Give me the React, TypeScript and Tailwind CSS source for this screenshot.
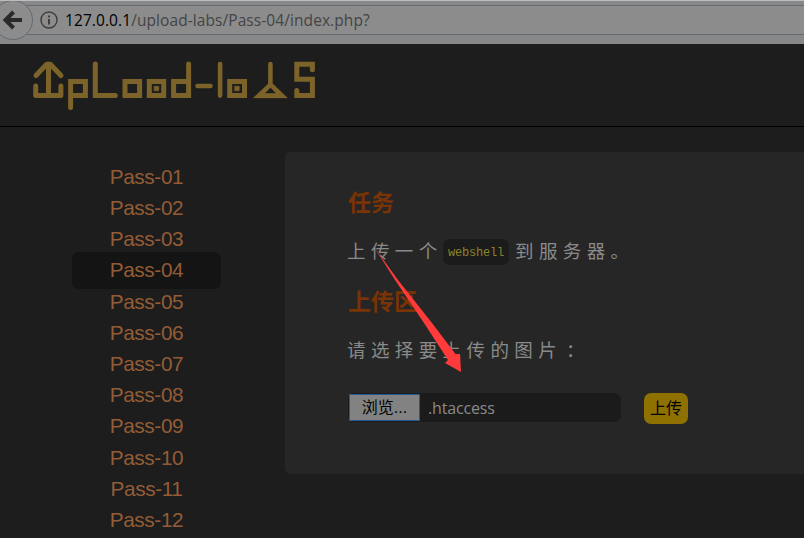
import React from "react";

const passes = ["01", "02", "03", "04", "05", "06", "07", "08", "09", "10", "11", "12"];
const cjk = "font-['Liberation_Sans','Noto_Sans_CJK_SC',sans-serif]";

function AddressBar() {
  return (
    <div className="relative h-[44px] border-t border-[#bdbdbd] bg-[#888888] overflow-hidden">
      <div className="mt-[4px] flex h-[30px] items-center border-y border-[#636b73] bg-[#8c8c8c] pl-[40px]">
        <svg width="18" height="18" viewBox="0 0 18 18" fill="none" stroke="#3e3e3e" strokeWidth="1.4">
          <circle cx="9" cy="9" r="8" />
          <path d="M9 8v5.4M9 4.6v2" strokeWidth="2" />
        </svg>
        <span className="ml-[7px] whitespace-pre font-['Open_Sans',sans-serif] text-[15.5px] leading-[28px] tracking-[0.08px] text-[#444]">
          <span className="text-black">127.0.0.1</span>/upload-labs/Pass-04/index.php?
        </span>
      </div>
      <svg className="absolute left-0 top-[-1px]" width="36" height="44" viewBox="0 0 36 44" fill="none">
        <circle cx="13" cy="20" r="19.5" fill="#8c8c8c" stroke="#636b73" />
        <path d="M22 20H6M13.5 12L5.5 20l8 8" stroke="#2a2a2a" strokeWidth="4" />
      </svg>
    </div>
  );
}

function Logo() {
  return (
    <svg width="300" height="60" viewBox="25 55 300 60" fill="none" stroke="#7c6329" strokeWidth="5" strokeLinecap="round" strokeLinejoin="round" className="block">
      <path d="M36 75.5L46.7 64.2h3.6L61 75.5M48.5 65v30M35.7 86v9.6h25.2V86" />
      <path d="M70.6 107.5V81.4h14.8v14.2H70.6" strokeLinejoin="miter" />
      <path d="M95.3 64v31.6h20" strokeLinejoin="miter" />
      <path d="M125 81.4h14.6v14.2H125zM149.3 81.4h14.4v14.2h-14.4zM188.6 64v31.6h-15V81.4h15M229.7 81.4h14.8v14.2h-14.8z" strokeLinejoin="miter" />
      <path d="M197.5 86h13M220.1 64v31.6M270.4 64v20" strokeWidth="4.6" />
      <path d="M253.3 98h34.3L273 84h-5zM265 93.2l5.5-5.6 5.5 5.6z" fill="#7c6329" fillRule="evenodd" strokeWidth=".3" />
      <path d="M312.4 69.8v-5.6h-15.6v15h15.6v16.4h-15.6v-5" strokeLinejoin="miter" />
      <path d="M154.2 86.2h4.6v4.6h-4.6zM234.7 86.2h4.6v4.6h-4.6z" fill="#7c6329" strokeWidth=".5" />
    </svg>
  );
}

export default function App() {
  return (
    <div className="relative h-[538px] w-[804px] overflow-hidden bg-[#1d1d1d]">
      <AddressBar />
      <header className="h-[83px] border-b border-black pl-[25px] pt-[11px]">
        <Logo />
      </header>
      <main className="flex items-start">
        <nav className="ml-[72px] mt-[33.9px] w-[149px] font-['Liberation_Sans',sans-serif] text-[20.8px] tracking-[-0.4px] text-[#935c36]">
          {passes.map((n) => (
            <div key={n} className="flex h-[31.2px] items-center justify-center">
              <div className={n === "04" ? "flex h-[37px] w-full shrink-0 items-center justify-center rounded-[7px] bg-[#141414] pb-px" : ""}>Pass-{n}</div>
            </div>
          ))}
        </nav>
        <section className={`ml-[64px] mt-[25px] h-[322px] w-[519px] rounded-l-[6px] bg-[#262626] pl-[63px] text-[#8a8a8a] ${cjk}`}>
          <h3 className="mt-[35px] h-[32px] text-[23px] font-bold leading-[32px] text-[#7a3304]">任务</h3>
          <div className="mt-[18px] flex h-[30px] items-center whitespace-pre text-[18.5px] leading-[30px] tracking-[5.4px]">
            <span className="-ml-px w-[96px]">上传一个</span>
            <code className="mr-[6px] h-[26px] w-[66px] rounded-[7px] bg-[#1b1b1b] text-center font-['Liberation_Mono',monospace] text-[12px] leading-[28px] tracking-[-0.2px] text-[#8c8428]">webshell</code>
            <span>到服务器。</span>
          </div>
          <h3 className="mt-[19px] h-[32px] text-[23px] font-bold leading-[32px] text-[#7a3304]">上传区</h3>
          <div className="-ml-px mt-[18px] h-[30px] whitespace-pre text-[18.5px] leading-[30px] tracking-[5.4px]">请选择要上传的图片<span className="ml-[4px]">：</span></div>
          <div className="mt-[27px] flex items-start">
            <div className="flex h-[29px] w-[273px] items-center rounded-[7px] bg-[#1b1b1b]">
              <button className="ml-px h-[27px] w-[71px] shrink-0 border border-[#245b93] bg-[#828282] text-[16px] leading-[26px] text-black">浏览...</button>
              <span className="ml-[8px] font-['Open_Sans',sans-serif] text-[16px] tracking-[-0.15px]">.htaccess</span>
            </div>
            <button className="ml-[23px] h-[31px] w-[44px] rounded-[7px] bg-[#8e7100] text-[16px] leading-[30px] text-black">上传</button>
          </div>
        </section>
      </main>
      <svg className="absolute left-[370px] top-[240px]" width="100" height="140" viewBox="370 240 100 140">
        <path d="M373.5 246L398 280L432 323L455.5 354L460 354L461 372L445 363L448 360L424 323L395 280Z" fill="#ff3a3a" />
      </svg>
    </div>
  );
}
